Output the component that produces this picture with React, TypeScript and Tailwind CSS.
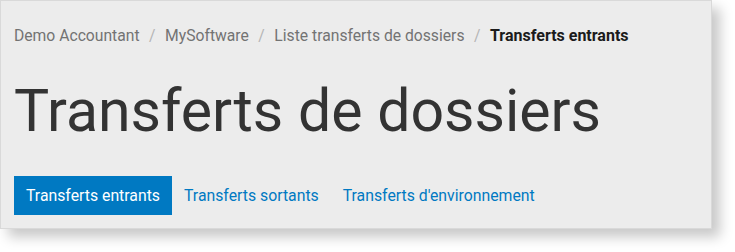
export default function App() {
  const crumbs = ["Demo Accountant", "MySoftware", "Liste transferts de dossiers"];
  const tabs = ["Transferts entrants", "Transferts sortants", "Transferts d'environnement"];

  return (
    <div className="w-[735px] h-[252px] bg-white font-['Roboto',sans-serif]">
      <div className="w-[712px] h-[229px] bg-[#ececec] border border-[#d9d9d9] shadow-[8px_8px_12px_rgba(0,0,0,0.22)] pl-[13px] pt-[24px]">
        <nav className="flex items-center h-[22px] text-[15.7px] text-[#737373]">
          {crumbs.map((c) => (
            <span key={c} className="flex items-center">
              <span>{c}</span>
              <span className="px-[9.5px] text-[#b5b5b5]">/</span>
            </span>
          ))}
          <span className="font-bold text-[16px] text-[#1b1b1b]">Transferts entrants</span>
        </nav>
        <h1 className="mt-[34px] text-[59px] leading-[60px] text-[#333333]">
          Transferts de dossiers
        </h1>
        <div className="mt-[35px] flex text-[15.8px]">
          {tabs.map((t, i) => (
            <a
              key={t}
              className={
                i === 0
                  ? "h-[39px] flex items-center px-[12px] bg-[#0079c2] text-white"
                  : "h-[39px] flex items-center px-[12px] text-[#0079c2]"
              }
            >
              {t}
            </a>
          ))}
        </div>
      </div>
    </div>
  );
}
